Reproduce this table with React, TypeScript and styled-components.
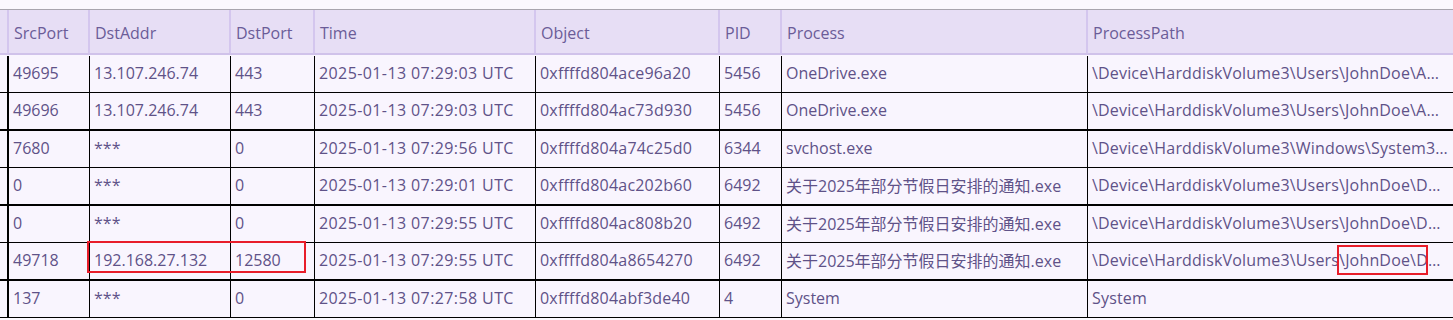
import styled, { createGlobalStyle } from 'styled-components';

const GlobalStyle = createGlobalStyle`
    html, body {
        margin: 0;
        padding: 0;
        background: #fbf8fe;
    }
    body {
        font-family: "Open Sans", "Noto Sans CJK SC", sans-serif;
        font-size: 16px;
        color: #5f5288;
    }
`;

const COLS = '9px 81px 141px 84px 221px 184px 62px 306px 1fr';

type Conn = {
    src: string;
    addr: string;
    dst: string;
    time: string;
    obj: string;
    pid: string;
    proc: string;
    path: string;
};

const NOTICE = '关于2025年部分节假日安排的通知.exe';
const DESKTOP = '\\Device\\HarddiskVolume3\\Users\\JohnDoe\\Desktop\\' + NOTICE;
const ONEDRIVE = '\\Device\\HarddiskVolume3\\Users\\JohnDoe\\AppData\\Local\\Microsoft\\OneDrive\\OneDrive.exe';

const rows: Conn[] = [
    { src: '49695', addr: '13.107.246.74', dst: '443', time: '2025-01-13 07:29:03 UTC', obj: '0xffffd804ace96a20', pid: '5456', proc: 'OneDrive.exe', path: ONEDRIVE },
    { src: '49696', addr: '13.107.246.74', dst: '443', time: '2025-01-13 07:29:03 UTC', obj: '0xffffd804ac73d930', pid: '5456', proc: 'OneDrive.exe', path: ONEDRIVE },
    { src: '7680', addr: '***', dst: '0', time: '2025-01-13 07:29:56 UTC', obj: '0xffffd804a74c25d0', pid: '6344', proc: 'svchost.exe', path: '\\Device\\HarddiskVolume3\\Windows\\System32\\svchost.exe' },
    { src: '0', addr: '***', dst: '0', time: '2025-01-13 07:29:01 UTC', obj: '0xffffd804ac202b60', pid: '6492', proc: NOTICE, path: DESKTOP },
    { src: '0', addr: '***', dst: '0', time: '2025-01-13 07:29:55 UTC', obj: '0xffffd804ac808b20', pid: '6492', proc: NOTICE, path: DESKTOP },
    { src: '49718', addr: '192.168.27.132', dst: '12580', time: '2025-01-13 07:29:55 UTC', obj: '0xffffd804a8654270', pid: '6492', proc: NOTICE, path: DESKTOP },
    { src: '137', addr: '***', dst: '0', time: '2025-01-13 07:27:58 UTC', obj: '0xffffd804abf3de40', pid: '4', proc: 'System', path: 'System' },
];

const headers = ['SrcPort', 'DstAddr', 'DstPort', 'Time', 'Object', 'PID', 'Process', 'ProcessPath'];

const App = () => {
    return (
        <>
            <GlobalStyle />
            <Wrap>
                <HeadRow>
                    <HeadCell />
                    {headers.map((h) => (
                        <HeadCell key={h}>{h}</HeadCell>
                    ))}
                </HeadRow>
                <Body>
                    {rows.map((r, i) => {
                        const flagged = r.addr === '192.168.27.132';
                        return (
                            <Row key={r.obj} $thick={i % 2 === 1}>
                                <Lead />
                                <Cell>{r.src}</Cell>
                                <Cell $marked={flagged}>{r.addr}</Cell>
                                <Cell>{r.dst}</Cell>
                                <Cell $spacing={0.4}>{r.time}</Cell>
                                <Cell $spacing={0.2}>{r.obj}</Cell>
                                <Cell>{r.pid}</Cell>
                                <Cell>{r.proc}</Cell>
                                <PathCell>
                                    {flagged ? (
                                        <>
                                            {'\\Device\\HarddiskVolume3\\Users'}
                                            <Mark>{'\\JohnDoe\\'}</Mark>
                                            {'Desktop\\' + NOTICE}
                                        </>
                                    ) : (
                                        r.path
                                    )}
                                </PathCell>
                            </Row>
                        );
                    })}
                </Body>
            </Wrap>
        </>
    );
};

export default App;

const Wrap = styled.div`
    width: 1453px;
    padding-top: 9px;
    overflow: hidden;
`;

const HeadRow = styled.div`
    display: grid;
    grid-template-columns: ${COLS};
    height: 46px;
    box-sizing: border-box;
    border-top: 1px solid #a9a5ae;
    border-bottom: 2px solid #d0c2ea;
    background: #e7def5;
    color: #6b5c98;
`;

const HeadCell = styled.div`
    display: flex;
    align-items: center;
    padding: 2px 0 0 5px;
    box-sizing: border-box;
    border-right: 2px solid #d4c6ee;
    white-space: nowrap;
    overflow: hidden;
    &:last-child {
        border-right: none;
    }
`;

const Body = styled.div`
    padding-top: 1px;
    background: #f9f5fe;
`;

const Row = styled.div<{ $thick: boolean }>`
    display: grid;
    grid-template-columns: ${COLS};
    height: ${(p) => (p.$thick ? 38 : 37)}px;
    box-sizing: border-box;
    border-bottom: ${(p) => (p.$thick ? 2 : 1)}px solid #000;
    &:first-child {
        height: ${(p) => (p.$thick ? 39 : 38)}px;
        margin-top: -1px;
        padding-top: 1px;
    }
`;

const Lead = styled.div`
    box-sizing: border-box;
    border-right: 2px solid #000;
`;

const Cell = styled.div<{ $marked?: boolean; $spacing?: number }>`
    position: relative;
    display: flex;
    align-items: center;
    padding: 0 0 2px 4px;
    box-sizing: border-box;
    border-right: 1px solid #000;
    white-space: nowrap;
    letter-spacing: ${(p) => p.$spacing ?? 0}px;
    ${(p) =>
        p.$marked &&
        `
        &::after {
            content: '';
            position: absolute;
            left: -3px;
            top: -2px;
            width: 219px;
            height: 32px;
            box-sizing: border-box;
            border: 2px solid #e81d2a;
            z-index: 2;
        }
    `}
`;

const PathCell = styled.div`
    display: block;
    line-height: 35px;
    padding: 0 4.5px 0 4px;
    box-sizing: border-box;
    white-space: nowrap;
    overflow: hidden;
    text-overflow: ellipsis;
    letter-spacing: 0.17px;
`;

const Mark = styled.span`
    position: relative;
    &::after {
        content: '';
        position: absolute;
        left: -2px;
        right: -12px;
        top: -4px;
        bottom: -4px;
        border: 2px solid #e81d2a;
    }
`;
